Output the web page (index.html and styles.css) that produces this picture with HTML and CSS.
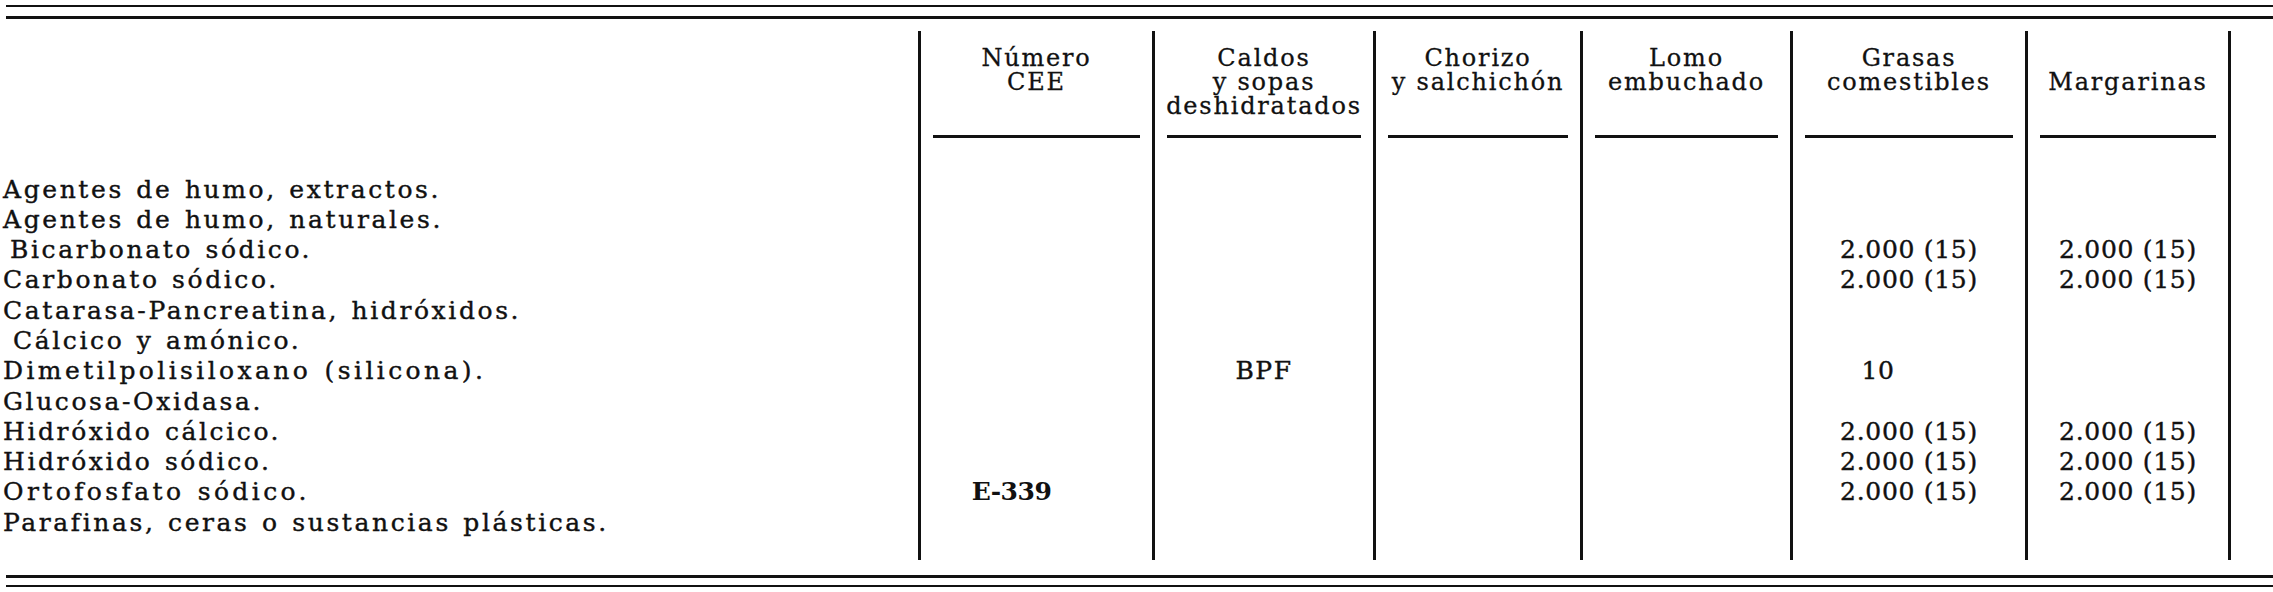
FILE: index.html
```html
<!DOCTYPE html>
<html lang="es">
<head>
<meta charset="utf-8">
<title>Aditivos</title>
<link rel="stylesheet" href="styles.css">
</head>
<body>
<div class="page">
  <div class="rules rules-top">
    <div class="rule rule-thin"></div>
    <div class="rule"></div>
  </div>

  <div class="table">
    <div class="row head-row">
      <div class="hcell label-col"></div>
      <div class="hcell col"><div class="htext">Número<br>CEE</div><div class="uline"></div></div>
      <div class="hcell col"><div class="htext">Caldos<br>y sopas<br>deshidratados</div><div class="uline"></div></div>
      <div class="hcell col"><div class="htext">Chorizo<br>y salchichón</div><div class="uline"></div></div>
      <div class="hcell col"><div class="htext">Lomo<br>embuchado</div><div class="uline"></div></div>
      <div class="hcell col"><div class="htext">Grasas<br>comestibles</div><div class="uline"></div></div>
      <div class="hcell col last"><div class="htext drop">Margarinas</div><div class="uline"></div></div>
    </div>

    <div class="row"><div class="label">Agentes de humo, extractos.</div><div class="cell"></div><div class="cell"></div><div class="cell"></div><div class="cell"></div><div class="cell"></div><div class="cell last"></div></div>
    <div class="row"><div class="label">Agentes de humo, naturales.</div><div class="cell"></div><div class="cell"></div><div class="cell"></div><div class="cell"></div><div class="cell"></div><div class="cell last"></div></div>
    <div class="row"><div class="label indent-s">Bicarbonato sódico.</div><div class="cell"></div><div class="cell"></div><div class="cell"></div><div class="cell"></div><div class="cell num">2.000 (15)</div><div class="cell num last">2.000 (15)</div></div>
    <div class="row"><div class="label">Carbonato sódico.</div><div class="cell"></div><div class="cell"></div><div class="cell"></div><div class="cell"></div><div class="cell num">2.000 (15)</div><div class="cell num last">2.000 (15)</div></div>
    <div class="row"><div class="label">Catarasa-Pancreatina, hidróxidos.</div><div class="cell"></div><div class="cell"></div><div class="cell"></div><div class="cell"></div><div class="cell"></div><div class="cell last"></div></div>
    <div class="row"><div class="label indent">Cálcico y amónico.</div><div class="cell"></div><div class="cell"></div><div class="cell"></div><div class="cell"></div><div class="cell"></div><div class="cell last"></div></div>
    <div class="row"><div class="label loose">Dimetilpolisiloxano (silicona).</div><div class="cell"></div><div class="cell code">BPF</div><div class="cell"></div><div class="cell"></div><div class="cell num shift">10</div><div class="cell last"></div></div>
    <div class="row"><div class="label">Glucosa-Oxidasa.</div><div class="cell"></div><div class="cell"></div><div class="cell"></div><div class="cell"></div><div class="cell"></div><div class="cell last"></div></div>
    <div class="row"><div class="label">Hidróxido cálcico.</div><div class="cell"></div><div class="cell"></div><div class="cell"></div><div class="cell"></div><div class="cell num">2.000 (15)</div><div class="cell num last">2.000 (15)</div></div>
    <div class="row"><div class="label">Hidróxido sódico.</div><div class="cell"></div><div class="cell"></div><div class="cell"></div><div class="cell"></div><div class="cell num">2.000 (15)</div><div class="cell num last">2.000 (15)</div></div>
    <div class="row"><div class="label loose">Ortofosfato sódico.</div><div class="cell ecode">E-339</div><div class="cell"></div><div class="cell"></div><div class="cell"></div><div class="cell num">2.000 (15)</div><div class="cell num last">2.000 (15)</div></div>
    <div class="row"><div class="label">Parafinas, ceras o sustancias plásticas.</div><div class="cell"></div><div class="cell"></div><div class="cell"></div><div class="cell"></div><div class="cell"></div><div class="cell last"></div></div>

    <div class="row foot-row"><div class="label"></div><div class="cell"></div><div class="cell"></div><div class="cell"></div><div class="cell"></div><div class="cell"></div><div class="cell last"></div></div>
  </div>

  <div class="rules rules-bottom">
    <div class="rule"></div>
    <div class="rule rule-thin"></div>
  </div>
</div>
</body>
</html>
```

FILE: styles.css
```css
* {
  box-sizing: border-box;
}

html, body {
  margin: 0;
  padding: 0;
  background: #ffffff;
}

body {
  font-family: "DejaVu Serif", "Liberation Serif", serif;
  color: #111111;
  width: 2273px;
  height: 592px;
  overflow: hidden;
}

.rules {
  display: flex;
  flex-direction: column;
  margin-left: 6px;
}

.rules-top {
  padding-top: 5px;
  gap: 9px;
}

.rules-bottom {
  margin-top: 15px;
  gap: 7px;
}

.rule {
  height: 3px;
  background: #111111;
}

.rule-thin {
  height: 2px;
}

.table {
  margin-top: 12px;
  display: flex;
  flex-direction: column;
}

.row {
  display: grid;
  grid-template-columns: 918px 234px 221px 207px 210px 235px 206px;
  height: 30.3px;
}

.head-row {
  height: 143.5px;
}

.foot-row {
  height: 21.9px;
}

.hcell {
  display: flex;
  flex-direction: column;
}

.col,
.cell {
  border-left: 3px solid #111111;
}

.last {
  border-right: 3px solid #111111;
}

.htext {
  height: 104px;
  padding-top: 15px;
  text-align: center;
  font-size: 24px;
  line-height: 24px;
  letter-spacing: 1.8px;
  -webkit-text-stroke: 0.3px #111111;
}

.htext.drop {
  padding-top: 39px;
}

.uline {
  height: 3px;
  background: #111111;
  margin: 0 12px;
}

.label,
.cell {
  font-size: 25px;
  line-height: 30.3px;
  white-space: nowrap;
  -webkit-text-stroke: 0.4px #111111;
}

.label {
  padding-left: 3px;
  letter-spacing: 2.6px;
  word-spacing: 2px;
}

.label.loose {
  letter-spacing: 3.4px;
}

.label.indent-s {
  padding-left: 10px;
}

.label.indent {
  padding-left: 13px;
}

.cell {
  text-align: center;
}

.num {
  letter-spacing: 0.7px;
}

.num.shift {
  padding-right: 62px;
}

.code {
  letter-spacing: 1.5px;
}

.ecode {
  font-weight: bold;
  letter-spacing: -0.5px;
  padding-right: 50px;
  -webkit-text-stroke: 0;
}
```
